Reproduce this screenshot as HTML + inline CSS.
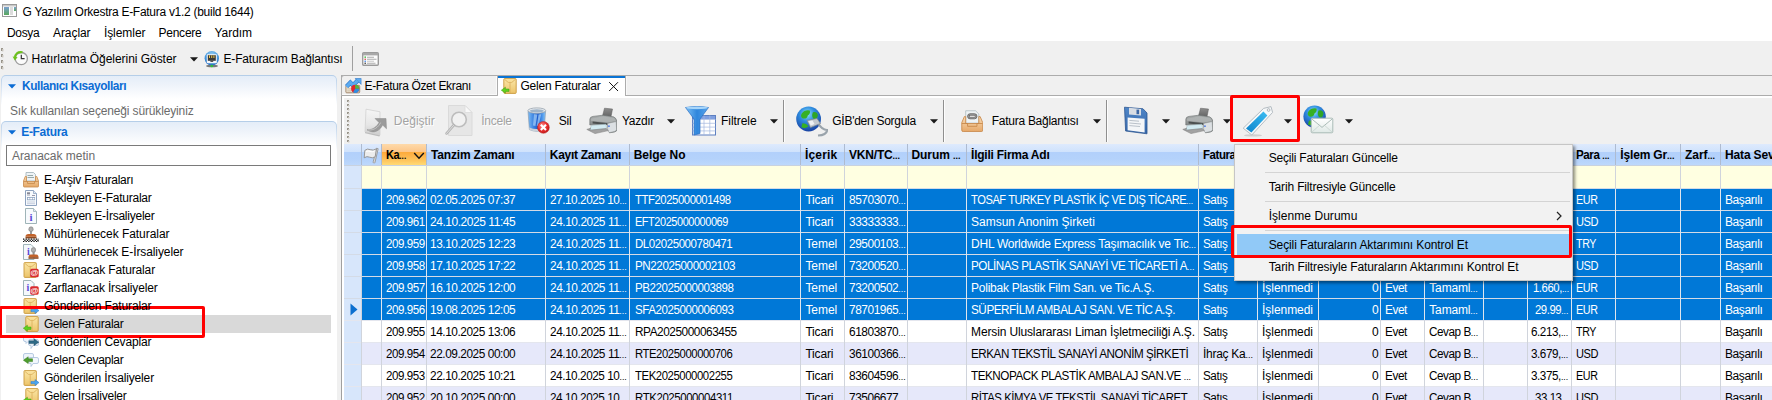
<!DOCTYPE html><html lang="tr"><head><meta charset="utf-8"><title>G Yazılım Orkestra E-Fatura</title><style>
html,body{margin:0;padding:0}
body{width:1772px;height:400px;overflow:hidden;background:#f0f0f0;position:relative;
font-family:"Liberation Sans",sans-serif;font-size:12px;color:#000}
div,span,svg{position:absolute}
.t{white-space:pre;line-height:16px;height:16px;font-size:12px;transform-origin:0 0}
.b{font-weight:bold}
i{font-style:normal;font-size:9px;letter-spacing:0}
.dis{color:#a3a3a3;text-shadow:1px 1px 0 #fff}
.r{background:#ff0000}
</style></head><body>
<div style="left:0px;top:0px;width:1772px;height:41px;background:#fff;"></div>
<svg style="left:2px;top:4px" width="15" height="13" viewBox="0 0 15 13"><defs><linearGradient id="g26" x1="0" y1="0" x2="0" y2="1"><stop offset="0" stop-color="#7a9fd0"/><stop offset="1" stop-color="#58a85c"/></linearGradient></defs><rect x="0.5" y="0.5" width="14" height="12" fill="#fff" stroke="#9a9a9a"/><rect x="1" y="1" width="13" height="1.5" fill="#c8c8c8"/><rect x="2" y="3" width="5" height="8" fill="url(#g26)"/><rect x="8" y="3" width="3" height="8" fill="#dcdcdc"/><rect x="12" y="3" width="2" height="4" fill="url(#g26)"/></svg>
<svg style="left:1px;top:48px" width="3" height="22" viewBox="0 0 3 22"><rect x="0" y="0" width="2" height="3" fill="#9a968c"/><rect x="1" y="1" width="1.4" height="2.4" fill="#c8c4bc"/><rect x="0" y="6" width="2" height="3" fill="#9a968c"/><rect x="1" y="7" width="1.4" height="2.4" fill="#c8c4bc"/><rect x="0" y="12" width="2" height="3" fill="#9a968c"/><rect x="1" y="13" width="1.4" height="2.4" fill="#c8c4bc"/><rect x="0" y="18" width="2" height="3" fill="#9a968c"/><rect x="1" y="19" width="1.4" height="2.4" fill="#c8c4bc"/></svg>
<svg style="left:12px;top:50px" width="17" height="17" viewBox="0 0 17 17"><circle cx="9.3" cy="8.6" r="6.1" fill="#fbfbfb" stroke="#9c9c9c" stroke-width="1.3"/><path d="M9.3 4.8V8.6H12.6" stroke="#333" stroke-width="1.2" fill="none"/><path d="M10.5 2.3C6 1.2 2.8 4 3 8" stroke="#6cc21c" stroke-width="2.2" fill="none"/><path d="M0.6 6.6L5.6 7.2L2.8 10.6Z" fill="#6cc21c"/></svg>
<svg style="left:190px;top:57px" width="8" height="5" viewBox="0 0 8 5"><path d="M0 0.3H8L4 4.6Z" fill="#1a1a1a"/></svg>
<svg style="left:204px;top:51px" width="16" height="17" viewBox="0 0 16 17"><defs><radialGradient id="g27" cx="0.5" cy="0.3" r="0.7"><stop offset="0" stop-color="#9fd4f5"/><stop offset="0.6" stop-color="#4a9be0"/><stop offset="1" stop-color="#2a6fc0"/></radialGradient></defs><ellipse cx="8" cy="15" rx="6" ry="1.3" fill="#444" opacity=".7"/><circle cx="7.8" cy="7.3" r="7.2" fill="url(#g27)"/><rect x="2.8" y="3.2" width="10" height="9" rx="0.8" fill="#f3f5fa"/><rect x="3.8" y="4.2" width="8" height="5.6" fill="#3a3a3a"/><rect x="5" y="4.4" width="1" height="2.6" fill="#e8c24a"/><rect x="7.2" y="4.4" width="1" height="2.6" fill="#e8c24a"/><rect x="9.4" y="4.4" width="1" height="2.6" fill="#e8c24a"/><rect x="6.4" y="9" width="2.8" height="2" fill="#555"/><circle cx="7.8" cy="15" r="1.3" fill="#2fc03a"/></svg>
<div style="left:352px;top:46px;width:1px;height:25px;background:#a0a0a0;"></div>
<svg style="left:362px;top:52px" width="17" height="14" viewBox="0 0 17 14"><rect x="0.7" y="0.7" width="15.6" height="12.6" rx="1" fill="#fcfcfc" stroke="#9b9b9b" stroke-width="1.4"/><rect x="1" y="1" width="15" height="2.4" fill="#a8a8a8"/><rect x="2.5" y="4.5" width="1.4" height="1.3" fill="#22b022"/><rect x="2.5" y="6.6" width="1.4" height="1.3" fill="#d04040"/><rect x="2.5" y="8.6" width="1.4" height="1.3" fill="#3a7fe8"/><rect x="2.5" y="10.6" width="1.4" height="1.3" fill="#333"/><rect x="5" y="4.8" width="7" height="0.8" fill="#999"/><rect x="5" y="6.8" width="9.5" height="0.8" fill="#999"/><rect x="5" y="8.8" width="7" height="0.8" fill="#bbb"/><rect x="5" y="10.8" width="8.5" height="0.8" fill="#999"/></svg>
<div style="left:1px;top:76px;width:336px;height:330px;background:#fff;border-radius:4px 4px 0 0"></div>
<div style="left:1px;top:75px;width:336px;height:30px;border-radius:5px 5px 0 0;background:linear-gradient(#b4cde8,#dfe9f5 55%,#fff)"></div>
<div style="left:2px;top:76px;width:334px;height:29px;border-radius:4px 4px 0 0;background:linear-gradient(#e4edf8 0,#eef3fa 9px,#fff 23px)"></div>
<div style="left:1px;top:121px;width:336px;height:30px;border-radius:5px 5px 0 0;background:linear-gradient(#b4cde8,#dfe9f5 55%,#fff)"></div>
<div style="left:2px;top:122px;width:334px;height:29px;border-radius:4px 4px 0 0;background:linear-gradient(#e4edf8 0,#eef3fa 9px,#fff 23px)"></div>
<svg style="left:8px;top:84px" width="8" height="5" viewBox="0 0 8 5"><path d="M0 0.3H8L4 4.6Z" fill="#0b6cd4"/></svg>
<svg style="left:8px;top:130px" width="8" height="5" viewBox="0 0 8 5"><path d="M0 0.3H8L4 4.6Z" fill="#0b6cd4"/></svg>
<div style="left:6px;top:145px;width:323px;height:19px;border:1px solid #7a7a7a;background:#fff"></div>
<div style="left:6px;top:315px;width:325px;height:18px;background:#d9d9d9;"></div>
<svg style="left:23px;top:172px" width="16" height="16" viewBox="0 0 16 16"><defs><linearGradient id="g28" x1="0" y1="0" x2="0" y2="1"><stop offset="0" stop-color="#f8d7ad"/><stop offset="1" stop-color="#e5a867"/></linearGradient></defs><path d="M3 0.5H10.5L12.5 2.5V9H3Z" fill="#eef3f6" stroke="#9fb0b8" stroke-width=".8"/><rect x="4.5" y="3" width="5.5" height="1" fill="#9aa"/><rect x="4.5" y="5" width="6.5" height="1" fill="#9aa"/><path d="M2.2 4.5L0.5 9V14.2Q0.5 15 1.3 15H14.7Q15.5 15 15.5 14.2V9L13.8 4.5H12.5V9.5H3.5V4.5Z" fill="url(#g28)" stroke="#c88a4c" stroke-width=".8"/><path d="M0.8 9.5H4.5V11.5H11.5V9.5H15.2" fill="none" stroke="#c88a4c" stroke-width=".8"/></svg>
<svg style="left:23px;top:190px" width="16" height="16" viewBox="0 0 16 16"><path d="M2.5 0.5H10.5L13.5 3.5V15.5H2.5Z" fill="#f7fafd" stroke="#8ea3c0"/><path d="M10.5 0.5V3.5H13.5" fill="#dfe8f2" stroke="#8ea3c0" stroke-width=".8"/><rect x="4" y="2.5" width="3" height="1.2" fill="#556"/><rect x="4" y="4.5" width="3" height="1" fill="#99a"/><rect x="9" y="5" width="3" height="1" fill="#99a"/><rect x="4" y="7" width="8" height="3.2" fill="#8ea3c0"/><rect x="4.8" y="7.8" width="1.8" height="1.6" fill="#fff"/><rect x="7.2" y="7.8" width="1.8" height="1.6" fill="#fff"/><rect x="9.6" y="7.8" width="1.8" height="1.6" fill="#fff"/><rect x="4" y="11.5" width="8" height="1" fill="#c5cede"/><rect x="4" y="13.2" width="8" height="1" fill="#c5cede"/></svg>
<svg style="left:23px;top:208px" width="16" height="16" viewBox="0 0 16 16"><path d="M2.5 0.5H10.5L13.5 3.5V15.5H2.5Z" fill="#f7fafd" stroke="#9fb4b8"/><path d="M10.5 0.5V3.5H13.5" fill="#dfe8f2" stroke="#9fb4b8" stroke-width=".8"/><text x="8" y="13" font-family="Liberation Serif,serif" font-weight="bold" font-size="11" fill="#5a49d8" text-anchor="middle">i</text></svg>
<svg style="left:23px;top:226px" width="16" height="16" viewBox="0 0 16 16"><ellipse cx="8" cy="3.2" rx="2.2" ry="2.4" fill="#b0b0b0" stroke="#7c7c7c" stroke-width=".6"/><rect x="7.1" y="5" width="1.8" height="3.6" fill="#8f8f8f"/><path d="M2.5 10.8Q2.5 8 5.5 8H10.5Q13.5 8 13.5 10.8Z" fill="#c2622a"/><rect x="2.5" y="10.8" width="11" height="1.6" fill="#8c4a22"/><path d="M0 13.1H16" stroke="#111" stroke-width="1.2" stroke-dasharray="1.3 1.3"/><path d="M0 14.3H16" stroke="#111" stroke-width="1.2" stroke-dasharray="1.3 1.3" stroke-dashoffset="1.3"/><path d="M0 15.5H16" stroke="#111" stroke-width="1" stroke-dasharray="1.3 1.3"/></svg>
<svg style="left:23px;top:244px" width="16" height="16" viewBox="0 0 16 16"><path d="M0.5 0.5H8L11 3.5V15.5H0.5Z" fill="#f4f8fb" stroke="#9fb4b8"/><text x="5.5" y="11" font-family="Liberation Serif,serif" font-weight="bold" font-size="10" fill="#5a49d8" text-anchor="middle">i</text><ellipse cx="10.5" cy="6" rx="2.2" ry="2.4" fill="#b0b0b0" stroke="#7c7c7c" stroke-width=".6"/><rect x="9.6" y="7.8" width="1.8" height="3.6" fill="#8f8f8f"/><path d="M5.5 13.2Q5.5 10.6 8 10.6H13Q15.5 10.6 15.5 13.2Z" fill="#c2622a"/><rect x="5.5" y="13.2" width="10" height="1.6" fill="#8c4a22"/></svg>
<svg style="left:23px;top:262px" width="16" height="16" viewBox="0 0 16 16"><defs><linearGradient id="g29" x1="0" y1="0" x2="0" y2="1"><stop offset="0" stop-color="#fbe7a8"/><stop offset="1" stop-color="#ecc46a"/></linearGradient></defs><rect x="1" y="0.6" width="12.4" height="14.8" rx="0.8" fill="url(#g29)" stroke="#c9983c" stroke-width=".9"/><path d="M1.4 1L5.4 4.4H9L13 1" fill="#f9e09a" stroke="#d6a852" stroke-width=".7"/><path d="M7.2 4.4V15" stroke="#d9ad5c" stroke-width=".8"/><rect x="7.2" y="6.8" width="8.5" height="8.5" rx="1.6" fill="#d92b30"/><text x="11.5" y="13.4" font-family="Liberation Sans,sans-serif" font-weight="bold" font-size="8" fill="#fff" text-anchor="middle">@</text></svg>
<svg style="left:23px;top:280px" width="16" height="16" viewBox="0 0 16 16"><path d="M0.5 0.5H8L11 3.5V15.5H0.5Z" fill="#f4f8fb" stroke="#9fb4b8"/><text x="5" y="11" font-family="Liberation Serif,serif" font-weight="bold" font-size="10" fill="#5a49d8" text-anchor="middle">i</text><rect x="7.2" y="6.2" width="8.5" height="8.5" rx="1.6" fill="#d92b30"/><text x="11.5" y="12.8" font-family="Liberation Sans,sans-serif" font-weight="bold" font-size="8" fill="#fff" text-anchor="middle">@</text></svg>
<svg style="left:23px;top:298px" width="16" height="16" viewBox="0 0 16 16"><defs><linearGradient id="g30" x1="0" y1="0" x2="0" y2="1"><stop offset="0" stop-color="#fbe7a8"/><stop offset="1" stop-color="#ecc46a"/></linearGradient></defs><rect x="1" y="0.6" width="12.4" height="14.8" rx="0.8" fill="url(#g30)" stroke="#c9983c" stroke-width=".9"/><path d="M1.4 1L5.4 4.4H9L13 1" fill="#f9e09a" stroke="#d6a852" stroke-width=".7"/><path d="M7.2 4.4V15" stroke="#d9ad5c" stroke-width=".8"/><path d="M8 11.4H12V9.6L16 12.6L12 15.6V13.8H8Z" fill="#4aa4f0" stroke="#2a78c8" stroke-width=".5"/></svg>
<svg style="left:23px;top:316px" width="16" height="16" viewBox="0 0 16 16"><g transform="translate(1.8 0)"><defs><linearGradient id="g31" x1="0" y1="0" x2="0" y2="1"><stop offset="0" stop-color="#fbe7a8"/><stop offset="1" stop-color="#ecc46a"/></linearGradient></defs><rect x="1" y="0.6" width="12.4" height="14.8" rx="0.8" fill="url(#g31)" stroke="#c9983c" stroke-width=".9"/><path d="M1.4 1L5.4 4.4H9L13 1" fill="#f9e09a" stroke="#d6a852" stroke-width=".7"/><path d="M7.2 4.4V15" stroke="#d9ad5c" stroke-width=".8"/></g><path d="M8 11H4.4V9.2L0.3 12.2L4.4 15.2V13.4H8Z" fill="#5fd21e" stroke="#3f9a10" stroke-width=".5"/></svg>
<svg style="left:23px;top:334px" width="16" height="16" viewBox="0 0 16 16"><path d="M2 1.5H9Q10.5 1.5 10.5 3V6Q10.5 7.5 9 7.5H5L3 9.5V7.5H2Q0.5 7.5 0.5 6V3Q0.5 1.5 2 1.5Z" fill="#eef4fb" stroke="#a9c0dc" stroke-width=".8"/><path d="M7 5.5H14Q15.5 5.5 15.5 7V10Q15.5 11.5 14 11.5H10L8 14.5V11.5H7Q5.5 11.5 5.5 10V7Q5.5 5.5 7 5.5Z" fill="#f2f7fc" stroke="#a9c0dc" stroke-width=".8"/><path d="M6 6.8H11V4.8L15.8 8.2L11 11.6V9.6H6Z" fill="#2d6a86" stroke="#1d4c66" stroke-width=".5"/></svg>
<svg style="left:23px;top:352px" width="16" height="16" viewBox="0 0 16 16"><path d="M2 1.5H9Q10.5 1.5 10.5 3V6Q10.5 7.5 9 7.5H5L3 9.5V7.5H2Q0.5 7.5 0.5 6V3Q0.5 1.5 2 1.5Z" fill="#eef4fb" stroke="#a9c0dc" stroke-width=".8"/><path d="M7 5.5H14Q15.5 5.5 15.5 7V10Q15.5 11.5 14 11.5H10L8 14.5V11.5H7Q5.5 11.5 5.5 10V7Q5.5 5.5 7 5.5Z" fill="#f2f7fc" stroke="#a9c0dc" stroke-width=".8"/><path d="M9.5 6.8H5.2V4.8L0.4 8.2L5.2 11.6V9.6H9.5Z" fill="#4e9e2e" stroke="#357a1a" stroke-width=".5"/></svg>
<svg style="left:23px;top:370px" width="16" height="16" viewBox="0 0 16 16"><defs><linearGradient id="g32" x1="0" y1="0" x2="0" y2="1"><stop offset="0" stop-color="#fbe7a8"/><stop offset="1" stop-color="#ecc46a"/></linearGradient></defs><rect x="1" y="0.6" width="12.4" height="14.8" rx="0.8" fill="url(#g32)" stroke="#c9983c" stroke-width=".9"/><path d="M1.4 1L5.4 4.4H9L13 1" fill="#f9e09a" stroke="#d6a852" stroke-width=".7"/><path d="M7.2 4.4V15" stroke="#d9ad5c" stroke-width=".8"/><path d="M8 11.4H12V9.6L16 12.6L12 15.6V13.8H8Z" fill="#4aa4f0" stroke="#2a78c8" stroke-width=".5"/></svg>
<svg style="left:23px;top:388px" width="16" height="16" viewBox="0 0 16 16"><g transform="translate(1.8 0)"><defs><linearGradient id="g33" x1="0" y1="0" x2="0" y2="1"><stop offset="0" stop-color="#fbe7a8"/><stop offset="1" stop-color="#ecc46a"/></linearGradient></defs><rect x="1" y="0.6" width="12.4" height="14.8" rx="0.8" fill="url(#g33)" stroke="#c9983c" stroke-width=".9"/><path d="M1.4 1L5.4 4.4H9L13 1" fill="#f9e09a" stroke="#d6a852" stroke-width=".7"/><path d="M7.2 4.4V15" stroke="#d9ad5c" stroke-width=".8"/></g><path d="M8 11H4.4V9.2L0.3 12.2L4.4 15.2V13.4H8Z" fill="#5fd21e" stroke="#3f9a10" stroke-width=".5"/></svg>
<div style="left:341px;top:75px;width:1431px;height:1px;background:#acacac;"></div>
<div style="left:341px;top:76px;width:1431px;height:19px;background:#f0f0f0;"></div>
<div style="left:341px;top:95px;width:1431px;height:1px;background:#acacac;"></div>
<div style="left:341px;top:96px;width:1431px;height:2px;background:#fff;"></div>
<div style="left:341px;top:76px;width:1px;height:330px;background:#a0a0a0;"></div>
<div style="left:342px;top:96px;width:2px;height:310px;background:#fff;"></div>
<div style="left:341px;top:75px;width:155px;height:19px;border:1px solid #acacac;border-radius:3px 0 0 0;background:#f0f0f0;box-shadow:inset -1px -1px 0 #fafafa"></div>
<svg style="left:345px;top:78px" width="17" height="16" viewBox="0 0 17 16"><rect x="0.9" y="7.4" width="13.8" height="7.4" rx="0.8" fill="#efe6d6" stroke="#9b7d60" stroke-width=".9"/><rect x="2.2" y="10.4" width="4" height="1" fill="#c9baa4"/><rect x="2.2" y="12.4" width="4" height="1" fill="#c9baa4"/><path d="M1.6 8.6L5.4 4.6L8 7.2L12.6 2.6" stroke="#2b74c6" stroke-width="4.4" fill="none" stroke-linejoin="miter"/><path d="M9.6 0.3H16.4V7.1Z" fill="#2b74c6"/><path d="M1.6 8.6L5.4 4.6L8 7.2L12.6 2.6" stroke="#5aaaf0" stroke-width="3.2" fill="none" stroke-linejoin="miter"/><path d="M10.8 0.8H15.9V5.9Z" fill="#5aaaf0"/><circle cx="10.2" cy="10.8" r="4.1" fill="#e2262c"/><path d="M10.2 10.8V6.7A4.1 4.1 0 0 1 14.3 10.8Z" fill="#52ba3c"/><path d="M10.2 10.8H14.3A4.1 4.1 0 0 1 8 14.3Z" fill="#2f8fe0"/></svg>
<div style="left:498px;top:76px;width:127px;height:22px;background:#fff;"></div>
<div style="left:497px;top:76px;width:1px;height:19px;background:#acacac;"></div>
<div style="left:625px;top:76px;width:1px;height:19px;background:#acacac;"></div>
<div style="left:498px;top:76px;width:127px;height:2px;background:#0a74d4;"></div>
<div style="left:626px;top:76px;width:1px;height:19px;background:#f8f8f8;"></div>
<svg style="left:501px;top:78px" width="16" height="16" viewBox="0 0 16 16"><g transform="translate(1.8 0)"><defs><linearGradient id="g34" x1="0" y1="0" x2="0" y2="1"><stop offset="0" stop-color="#fbe7a8"/><stop offset="1" stop-color="#ecc46a"/></linearGradient></defs><rect x="1" y="0.6" width="12.4" height="14.8" rx="0.8" fill="url(#g34)" stroke="#c9983c" stroke-width=".9"/><path d="M1.4 1L5.4 4.4H9L13 1" fill="#f9e09a" stroke="#d6a852" stroke-width=".7"/><path d="M7.2 4.4V15" stroke="#d9ad5c" stroke-width=".8"/></g><path d="M8 11H4.4V9.2L0.3 12.2L4.4 15.2V13.4H8Z" fill="#5fd21e" stroke="#3f9a10" stroke-width=".5"/></svg>
<svg style="left:608px;top:81px" width="11" height="11" viewBox="0 0 11 11"><path d="M1.2 1.2L10 10M10 1.2L1.2 10" stroke="#111" stroke-width="1" fill="none"/></svg>
<svg style="left:347px;top:100px" width="3" height="43" viewBox="0 0 3 43"><rect x="0" y="0" width="2" height="2" fill="#9a968c"/><rect x="1" y="1" width="1.4" height="1.4" fill="#c8c4bc"/><rect x="0" y="4" width="2" height="2" fill="#9a968c"/><rect x="1" y="5" width="1.4" height="1.4" fill="#c8c4bc"/><rect x="0" y="8" width="2" height="2" fill="#9a968c"/><rect x="1" y="9" width="1.4" height="1.4" fill="#c8c4bc"/><rect x="0" y="12" width="2" height="2" fill="#9a968c"/><rect x="1" y="13" width="1.4" height="1.4" fill="#c8c4bc"/><rect x="0" y="16" width="2" height="2" fill="#9a968c"/><rect x="1" y="17" width="1.4" height="1.4" fill="#c8c4bc"/><rect x="0" y="20" width="2" height="2" fill="#9a968c"/><rect x="1" y="21" width="1.4" height="1.4" fill="#c8c4bc"/><rect x="0" y="24" width="2" height="2" fill="#9a968c"/><rect x="1" y="25" width="1.4" height="1.4" fill="#c8c4bc"/><rect x="0" y="28" width="2" height="2" fill="#9a968c"/><rect x="1" y="29" width="1.4" height="1.4" fill="#c8c4bc"/><rect x="0" y="32" width="2" height="2" fill="#9a968c"/><rect x="1" y="33" width="1.4" height="1.4" fill="#c8c4bc"/><rect x="0" y="36" width="2" height="2" fill="#9a968c"/><rect x="1" y="37" width="1.4" height="1.4" fill="#c8c4bc"/><rect x="0" y="40" width="2" height="2" fill="#9a968c"/><rect x="1" y="41" width="1.4" height="1.4" fill="#c8c4bc"/></svg>
<svg style="left:364px;top:108px" width="24" height="29" viewBox="0 0 24 29"><defs><linearGradient id="g35" x1="0" y1="0" x2="0" y2="1"><stop offset="0" stop-color="#f6f6f6"/><stop offset="0.6" stop-color="#e6e6e6"/><stop offset="1" stop-color="#cdcdcd"/></linearGradient></defs><path d="M2 1.2L16 3.8V27.2L1 24Z" fill="url(#g35)" stroke="#d2d2d2" stroke-width=".8"/><path d="M1 24L16 27.2L15.4 28.4L1.2 25.2Z" fill="#bdbdbd"/><path d="M3 21.8C9 22 13 18.5 15 14.5L11 10.5H22L22.5 20.8L18.6 17C16 22.5 10 26.5 3 21.8Z" fill="#9b9b9b" stroke="#8a8a8a" stroke-width=".5"/><path d="M4 22C10 22.6 14.6 19 16.6 14.6" stroke="#c4c4c4" stroke-width="1" fill="none"/></svg>
<svg style="left:445px;top:105px" width="28" height="32" viewBox="0 0 28 32"><path d="M3.5 0.5H20L27 7.5V30.5H3.5Z" fill="#e6e6e6" stroke="#dadada"/><path d="M20 0.5V7.5H27Z" fill="#f8f8f8" stroke="#dadada" stroke-width=".8"/><circle cx="14" cy="14.5" r="7.3" fill="#f1f1f1" stroke="#bdbdbd" stroke-width="1.6"/><path d="M8.6 20.4L1.6 28.4" stroke="#b4b4b4" stroke-width="2.6" stroke-linecap="round"/><path d="M8.6 20.4L1.6 28.4" stroke="#dedede" stroke-width="1" stroke-linecap="round"/></svg>
<svg style="left:527px;top:107px" width="23" height="27" viewBox="0 0 23 27"><defs><linearGradient id="g36" x1="0" y1="0" x2="1" y2="0"><stop offset="0" stop-color="#7dbcf4"/><stop offset="0.3" stop-color="#3f86e2"/><stop offset="0.55" stop-color="#1c5ccc"/><stop offset="0.8" stop-color="#4a94ea"/><stop offset="1" stop-color="#8cc8f8"/></linearGradient><radialGradient id="g37" cx="0.4" cy="0.35" r="0.7"><stop offset="0" stop-color="#ff8a8a"/><stop offset="0.6" stop-color="#e52d2d"/><stop offset="1" stop-color="#c01818"/></radialGradient></defs><path d="M1 4.2L2.4 22.6Q9.8 26 17.2 22.6L18.6 4.2Q9.8 7.4 1 4.2Z" fill="url(#g36)" stroke="#8a97a6" stroke-width=".6"/><path d="M2.2 20.4Q9.8 23.4 17.4 20.4L17.2 22.8Q9.8 26 2.4 22.8Z" fill="#c9d1d9"/><path d="M7 7.2L6 18.6L8.4 19L10.4 7.6ZM11.6 7.6L9.8 19L11.4 19L14.2 7.2Z" fill="#a8d2f8" opacity=".7"/><ellipse cx="9.8" cy="3.6" rx="8.9" ry="2.7" fill="#e6eaee" stroke="#98a3ae" stroke-width=".8"/><ellipse cx="9.8" cy="3.9" rx="7" ry="1.6" fill="#9fb4c8"/><circle cx="16.4" cy="20.4" r="5.9" fill="url(#g37)" stroke="#b82020" stroke-width=".5"/><path d="M13.8 17.8L19 23M19 17.8L13.8 23" stroke="#fff" stroke-width="2.1"/></svg>
<svg style="left:586px;top:107px" width="31" height="28" viewBox="0 0 31 28"><defs><linearGradient id="g38" x1="0" y1="0" x2="0" y2="1"><stop offset="0" stop-color="#8c8c8c"/><stop offset="1" stop-color="#646464"/></linearGradient><linearGradient id="g39" x1="0" y1="0" x2="0" y2="1"><stop offset="0" stop-color="#a9adad"/><stop offset="0.5" stop-color="#8a8e8e"/><stop offset="1" stop-color="#6e7272"/></linearGradient></defs><path d="M18.5 1.2L26.5 2L25 9.8L16.5 9Z" fill="url(#g38)" stroke="#5a5a5a" stroke-width=".5"/><path d="M3.8 12.4Q3.8 9.8 7 9.4L17 8.2L27.5 9.8Q30.6 11 31 15V22Q31 24.6 28.5 25L23.5 25.8L21 17L3.8 18Z" fill="url(#g39)" stroke="#6a6e6e" stroke-width=".6"/><path d="M5.2 11.4L17 9.4L28 11Q29.6 12 30 14L22 15.6L5 13.8Z" fill="#b4b8b8" opacity=".75"/><path d="M6.6 14.4L22.6 16.2V18.2L6.6 16.4Z" fill="#4c5050"/><path d="M21.4 16.4L30.2 14.6L30.6 22.6Q30.4 24 28.6 24.4L23.6 25.6L21.8 24Z" fill="#dce0e3" stroke="#8b8f8f" stroke-width=".5"/><rect x="22.3" y="18.4" width="1.3" height="1.6" fill="#2f62e0"/><path d="M5.4 18.4L20 17.2L20.6 21.4L3.6 23.2Z" fill="#d3ebf2" stroke="#9fb4ba" stroke-width=".5"/><path d="M0.8 22.4L4.6 21.2L3.8 23.2L20.4 21.6L22.4 23.6L9 26.6Z" fill="#a2a2a2" stroke="#7c7c7c" stroke-width=".5"/></svg>
<svg style="left:666.5px;top:119px" width="8" height="5" viewBox="0 0 8 5"><path d="M0 0.3H8L4 4.6Z" fill="#1a1a1a"/></svg>
<svg style="left:685px;top:106px" width="31" height="30" viewBox="0 0 31 30"><defs><linearGradient id="g40" x1="0" y1="0" x2="1" y2="0"><stop offset="0" stop-color="#7cc0f6"/><stop offset="0.5" stop-color="#2f86dc"/><stop offset="1" stop-color="#5aa6ec"/></linearGradient></defs><rect x="7.5" y="9.5" width="23" height="19.5" fill="#fff" stroke="#5d7fc0"/><rect x="8" y="10" width="22" height="3.2" fill="#7f9fe0"/><path d="M7.5 13.5H30.5" stroke="#a3b8e0" stroke-width=".7"/><path d="M7.5 17.3H30.5" stroke="#a3b8e0" stroke-width=".7"/><path d="M7.5 21.1H30.5" stroke="#a3b8e0" stroke-width=".7"/><path d="M7.5 24.9H30.5" stroke="#a3b8e0" stroke-width=".7"/><path d="M13.2 9.5V29" stroke="#a3b8e0" stroke-width=".7"/><path d="M19 9.5V29" stroke="#a3b8e0" stroke-width=".7"/><path d="M24.8 9.5V29" stroke="#a3b8e0" stroke-width=".7"/><path d="M0.5 1.5Q12 -1 23.5 1.5L15 13V27.5L9 29V13Z" fill="url(#g40)" stroke="#2a6fc4" stroke-width=".7"/><ellipse cx="12" cy="1.8" rx="11" ry="1.4" fill="#a8d6fa"/></svg>
<svg style="left:769.5px;top:119px" width="8" height="5" viewBox="0 0 8 5"><path d="M0 0.3H8L4 4.6Z" fill="#1a1a1a"/></svg>
<div style="left:783px;top:100px;width:1px;height:42px;background:#8f8f8f"></div><div style="left:784px;top:100px;width:1px;height:42px;background:#fdfdfd"></div>
<svg style="left:796px;top:106px" width="32" height="31" viewBox="0 0 32 31"><defs><radialGradient id="g41" cx="0.45" cy="0.3" r="0.75"><stop offset="0" stop-color="#8fe4fb"/><stop offset="0.4" stop-color="#2f8de0"/><stop offset="1" stop-color="#163a9c"/></radialGradient><clipPath id="g42"><circle cx="12.6" cy="13" r="12.4"/></clipPath></defs><circle cx="12.6" cy="13" r="12.4" fill="url(#g41)"/><g clip-path="url(#g42)"><path d="M5.7799999999999985 7.42q3-4 8-3q1 3-2 5q-1 4-5 3q-3-2-1-5z" fill="#36b024"/><path d="M16.939999999999998 6.179999999999999q4-1 5 3q-1 5-4 4q-3-3-1-7z" fill="#2fa626"/><path d="M6.3999999999999995 17.34q4 0 6 3q-3 3-7 1z" fill="#36b024"/></g><path d="M22 17Q26 24 31 24Q31 29 22 29.5" stroke="#9aa4ac" stroke-width="2.2" fill="none"/><path d="M11 14.5L21 12.5L24.5 17.5L14.5 21.5Z" fill="#c3c9cf" stroke="#7e868e" stroke-width=".7"/><path d="M12.5 15.3L16.5 14.5L18.5 18L14.8 19.6Z" fill="#eef1f4"/></svg>
<svg style="left:930px;top:119px" width="8" height="5" viewBox="0 0 8 5"><path d="M0 0.3H8L4 4.6Z" fill="#1a1a1a"/></svg>
<div style="left:943px;top:100px;width:1px;height:42px;background:#8f8f8f"></div><div style="left:944px;top:100px;width:1px;height:42px;background:#fdfdfd"></div>
<svg style="left:960.5px;top:109.5px" width="22.5" height="22.5" viewBox="0 0 24 24"><defs><linearGradient id="g43" x1="0" y1="0" x2="0" y2="1"><stop offset="0" stop-color="#f9dcb6"/><stop offset="1" stop-color="#e6a868"/></linearGradient></defs><path d="M5 0.8H15.5L19 4.2V14H5Z" fill="#eef3f5" stroke="#a9b8bd" stroke-width=".8"/><rect x="7" y="4" width="10" height="5.4" rx="2.6" fill="#9b9b9b" stroke="#555" stroke-width=".8"/><rect x="9" y="5.8" width="6" height="1.8" fill="#eee" stroke="#555" stroke-width=".5"/><path d="M3.6 7L0.8 13.5V21.5Q0.8 23 2.3 23H21.7Q23.2 23 23.2 21.5V13.5L20.4 7H19V14.4H5V7Z" fill="url(#g43)" stroke="#c78748" stroke-width=".9"/><path d="M1 14.4H7V17.4H17V14.4H23" fill="none" stroke="#c78748" stroke-width=".9"/></svg>
<svg style="left:1092.5px;top:119px" width="8" height="5" viewBox="0 0 8 5"><path d="M0 0.3H8L4 4.6Z" fill="#1a1a1a"/></svg>
<div style="left:1106px;top:100px;width:1px;height:42px;background:#8f8f8f"></div><div style="left:1107px;top:100px;width:1px;height:42px;background:#fdfdfd"></div>
<svg style="left:1123px;top:106px" width="25" height="30" viewBox="0 0 25 30"><defs><linearGradient id="g44" x1="0" y1="0" x2="0" y2="1"><stop offset="0" stop-color="#4f86c8"/><stop offset="1" stop-color="#3566a8"/></linearGradient></defs><path d="M1.5 1.2L20 2.8L24 7V27.8L2.6 25Z" fill="url(#g44)" stroke="#2c5590" stroke-width=".8"/><path d="M6 1.8L18 2.9V9.4L6 8.6Z" fill="#d8dde4"/><rect x="13.5" y="3.6" width="2.6" height="4.6" fill="#3c68a6"/><path d="M4.6 11.5L21.6 12.8V26.4L4.6 24.2Z" fill="#f4f6f8"/><path d="M6.4 14.4L16 15.2M6.4 17L18 18M6.4 19.6L17 20.5" stroke="#aab3bd" stroke-width=".8"/></svg>
<svg style="left:1161.5px;top:119px" width="8" height="5" viewBox="0 0 8 5"><path d="M0 0.3H8L4 4.6Z" fill="#1a1a1a"/></svg>
<svg style="left:1182px;top:107px" width="31" height="28" viewBox="0 0 31 28"><defs><linearGradient id="g45" x1="0" y1="0" x2="0" y2="1"><stop offset="0" stop-color="#8c8c8c"/><stop offset="1" stop-color="#646464"/></linearGradient><linearGradient id="g46" x1="0" y1="0" x2="0" y2="1"><stop offset="0" stop-color="#a9adad"/><stop offset="0.5" stop-color="#8a8e8e"/><stop offset="1" stop-color="#6e7272"/></linearGradient></defs><path d="M18.5 1.2L26.5 2L25 9.8L16.5 9Z" fill="url(#g45)" stroke="#5a5a5a" stroke-width=".5"/><path d="M3.8 12.4Q3.8 9.8 7 9.4L17 8.2L27.5 9.8Q30.6 11 31 15V22Q31 24.6 28.5 25L23.5 25.8L21 17L3.8 18Z" fill="url(#g46)" stroke="#6a6e6e" stroke-width=".6"/><path d="M5.2 11.4L17 9.4L28 11Q29.6 12 30 14L22 15.6L5 13.8Z" fill="#b4b8b8" opacity=".75"/><path d="M6.6 14.4L22.6 16.2V18.2L6.6 16.4Z" fill="#4c5050"/><path d="M21.4 16.4L30.2 14.6L30.6 22.6Q30.4 24 28.6 24.4L23.6 25.6L21.8 24Z" fill="#dce0e3" stroke="#8b8f8f" stroke-width=".5"/><rect x="22.3" y="18.4" width="1.3" height="1.6" fill="#2f62e0"/><path d="M5.4 18.4L20 17.2L20.6 21.4L3.6 23.2Z" fill="#d3ebf2" stroke="#9fb4ba" stroke-width=".5"/><path d="M0.8 22.4L4.6 21.2L3.8 23.2L20.4 21.6L22.4 23.6L9 26.6Z" fill="#a2a2a2" stroke="#7c7c7c" stroke-width=".5"/></svg>
<svg style="left:1222.5px;top:119px" width="8" height="5" viewBox="0 0 8 5"><path d="M0 0.3H8L4 4.6Z" fill="#1a1a1a"/></svg>
<svg style="left:1242px;top:105px" width="32" height="32" viewBox="0 0 32 32"><defs><linearGradient id="g47" x1="0" y1="1" x2="1" y2="0"><stop offset="0" stop-color="#0d84cc"/><stop offset="1" stop-color="#3cbcf2"/></linearGradient></defs><ellipse cx="11" cy="30.4" rx="9" ry="1.2" fill="#c8c8c8" opacity=".8"/><path d="M1.2 23.2L21.6 3.4L29 1.6L30.6 7.4L9.8 30Z" fill="#f6f8f9" stroke="#b4bcc2" stroke-width="1"/><path d="M4 23.4L21.4 6.6L25.4 10.6L9.4 27.4Z" fill="url(#g47)"/><circle cx="26.6" cy="5" r="1.4" fill="#f0f0f0" stroke="#9aa4ac" stroke-width=".7"/></svg>
<svg style="left:1283.5px;top:119px" width="8" height="5" viewBox="0 0 8 5"><path d="M0 0.3H8L4 4.6Z" fill="#1a1a1a"/></svg>
<svg style="left:1303px;top:105px" width="31" height="29" viewBox="0 0 31 29"><defs><radialGradient id="g49" cx="0.45" cy="0.3" r="0.75"><stop offset="0" stop-color="#8fe4fb"/><stop offset="0.4" stop-color="#2f8de0"/><stop offset="1" stop-color="#163a9c"/></radialGradient><clipPath id="g50"><circle cx="11.6" cy="11.6" r="11.2"/></clipPath></defs><circle cx="11.6" cy="11.6" r="11.2" fill="url(#g49)"/><g clip-path="url(#g50)"><path d="M5.4399999999999995 6.56q3-4 8-3q1 3-2 5q-1 4-5 3q-3-2-1-5z" fill="#36b024"/><path d="M15.52 5.4399999999999995q4-1 5 3q-1 5-4 4q-3-3-1-7z" fill="#2fa626"/><path d="M6.0 15.52q4 0 6 3q-3 3-7 1z" fill="#36b024"/></g><defs><linearGradient id="g48" x1="0" y1="0" x2="0" y2="1"><stop offset="0" stop-color="#ffffff"/><stop offset="1" stop-color="#dfe9e6"/></linearGradient></defs><rect x="8.2" y="13.2" width="21.6" height="14.6" rx="1" fill="url(#g48)" stroke="#a3b5b0" stroke-width=".9"/><path d="M8.6 13.8L19 22.4L29.4 13.8" fill="none" stroke="#a3b5b0" stroke-width=".9"/><path d="M8.6 27.4L16.4 20.4M29.4 27.4L21.6 20.4" stroke="#c3d0cc" stroke-width=".7"/></svg>
<svg style="left:1345px;top:119px" width="8" height="5" viewBox="0 0 8 5"><path d="M0 0.3H8L4 4.6Z" fill="#1a1a1a"/></svg>
<div style="left:344px;top:144px;width:1428px;height:21px;background:linear-gradient(#deeafd 0,#cfe2fc 8px,#b2d0fb 8.5px,#b4d2fb 15px,#bdd8fc 21px)"></div>
<div style="left:382px;top:144px;width:44px;height:21px;background:linear-gradient(#fedaaa 0,#fdc688 8px,#fdab3c 8.5px,#fdb850 13px,#fec860 17px,#ffdb76 21px)"></div>
<div style="left:344px;top:166px;width:1428px;height:22px;background:#ffffe1;"></div>
<div style="left:344px;top:188px;width:1428px;height:22px;background:#0078d7;"></div>
<div style="left:344px;top:210px;width:1428px;height:22px;background:#0078d7;"></div>
<div style="left:344px;top:232px;width:1428px;height:22px;background:#0078d7;"></div>
<div style="left:344px;top:254px;width:1428px;height:22px;background:#0078d7;"></div>
<div style="left:344px;top:276px;width:1428px;height:22px;background:#0078d7;"></div>
<div style="left:344px;top:298px;width:1428px;height:22px;background:#0078d7;"></div>
<div style="left:344px;top:320px;width:1428px;height:22px;background:#fff;"></div>
<div style="left:344px;top:342px;width:1428px;height:22px;background:#e6e8fa;"></div>
<div style="left:344px;top:364px;width:1428px;height:22px;background:#fff;"></div>
<div style="left:344px;top:386px;width:1428px;height:22px;background:#e6e8fa;"></div>
<div style="left:344px;top:165px;width:17px;height:241px;background:#d7e6fb;"></div>
<div style="left:344px;top:188px;width:1428px;height:1px;background:#d4dbe6;"></div>
<div style="left:344px;top:210px;width:1428px;height:1px;background:#d4dbe6;"></div>
<div style="left:344px;top:232px;width:1428px;height:1px;background:#d4dbe6;"></div>
<div style="left:344px;top:254px;width:1428px;height:1px;background:#d4dbe6;"></div>
<div style="left:344px;top:276px;width:1428px;height:1px;background:#d4dbe6;"></div>
<div style="left:344px;top:298px;width:1428px;height:1px;background:#d4dbe6;"></div>
<div style="left:344px;top:320px;width:1428px;height:1px;background:#e4e6ee;"></div>
<div style="left:344px;top:342px;width:1428px;height:1px;background:#e4e6ee;"></div>
<div style="left:344px;top:364px;width:1428px;height:1px;background:#e4e6ee;"></div>
<div style="left:344px;top:386px;width:1428px;height:1px;background:#e4e6ee;"></div>
<div style="left:344px;top:165px;width:1428px;height:1px;background:#c9d2df;"></div>
<div style="left:361px;top:144px;width:1px;height:21px;background:#aebbd0;"></div>
<div style="left:361px;top:165px;width:1px;height:241px;background:#d0d4dc;"></div>
<div style="left:381px;top:144px;width:1px;height:21px;background:#aebbd0;"></div>
<div style="left:381px;top:165px;width:1px;height:241px;background:#d0d4dc;"></div>
<div style="left:426px;top:144px;width:1px;height:21px;background:#aebbd0;"></div>
<div style="left:426px;top:165px;width:1px;height:241px;background:#d0d4dc;"></div>
<div style="left:545px;top:144px;width:1px;height:21px;background:#aebbd0;"></div>
<div style="left:545px;top:165px;width:1px;height:241px;background:#d0d4dc;"></div>
<div style="left:629px;top:144px;width:1px;height:21px;background:#aebbd0;"></div>
<div style="left:629px;top:165px;width:1px;height:241px;background:#d0d4dc;"></div>
<div style="left:800px;top:144px;width:1px;height:21px;background:#aebbd0;"></div>
<div style="left:800px;top:165px;width:1px;height:241px;background:#d0d4dc;"></div>
<div style="left:844px;top:144px;width:1px;height:21px;background:#aebbd0;"></div>
<div style="left:844px;top:165px;width:1px;height:241px;background:#d0d4dc;"></div>
<div style="left:907px;top:144px;width:1px;height:21px;background:#aebbd0;"></div>
<div style="left:907px;top:165px;width:1px;height:241px;background:#d0d4dc;"></div>
<div style="left:966px;top:144px;width:1px;height:21px;background:#aebbd0;"></div>
<div style="left:966px;top:165px;width:1px;height:241px;background:#d0d4dc;"></div>
<div style="left:1198px;top:144px;width:1px;height:21px;background:#aebbd0;"></div>
<div style="left:1198px;top:165px;width:1px;height:241px;background:#d0d4dc;"></div>
<div style="left:1257px;top:144px;width:1px;height:21px;background:#aebbd0;"></div>
<div style="left:1257px;top:165px;width:1px;height:241px;background:#d0d4dc;"></div>
<div style="left:1318px;top:144px;width:1px;height:21px;background:#aebbd0;"></div>
<div style="left:1318px;top:165px;width:1px;height:241px;background:#d0d4dc;"></div>
<div style="left:1380px;top:144px;width:1px;height:21px;background:#aebbd0;"></div>
<div style="left:1380px;top:165px;width:1px;height:241px;background:#d0d4dc;"></div>
<div style="left:1424px;top:144px;width:1px;height:21px;background:#aebbd0;"></div>
<div style="left:1424px;top:165px;width:1px;height:241px;background:#d0d4dc;"></div>
<div style="left:1483px;top:144px;width:1px;height:21px;background:#aebbd0;"></div>
<div style="left:1483px;top:165px;width:1px;height:241px;background:#d0d4dc;"></div>
<div style="left:1527px;top:144px;width:1px;height:21px;background:#aebbd0;"></div>
<div style="left:1527px;top:165px;width:1px;height:241px;background:#d0d4dc;"></div>
<div style="left:1571px;top:144px;width:1px;height:21px;background:#aebbd0;"></div>
<div style="left:1571px;top:165px;width:1px;height:241px;background:#d0d4dc;"></div>
<div style="left:1615px;top:144px;width:1px;height:21px;background:#aebbd0;"></div>
<div style="left:1615px;top:165px;width:1px;height:241px;background:#d0d4dc;"></div>
<div style="left:1680px;top:144px;width:1px;height:21px;background:#aebbd0;"></div>
<div style="left:1680px;top:165px;width:1px;height:241px;background:#d0d4dc;"></div>
<div style="left:1720px;top:144px;width:1px;height:21px;background:#aebbd0;"></div>
<div style="left:1720px;top:165px;width:1px;height:241px;background:#d0d4dc;"></div>
<div style="left:381px;top:189px;width:1px;height:131px;background:#dfe6ee;"></div>
<div style="left:426px;top:189px;width:1px;height:131px;background:#dfe6ee;"></div>
<div style="left:545px;top:189px;width:1px;height:131px;background:#dfe6ee;"></div>
<div style="left:629px;top:189px;width:1px;height:131px;background:#dfe6ee;"></div>
<div style="left:800px;top:189px;width:1px;height:131px;background:#dfe6ee;"></div>
<div style="left:844px;top:189px;width:1px;height:131px;background:#dfe6ee;"></div>
<div style="left:907px;top:189px;width:1px;height:131px;background:#dfe6ee;"></div>
<div style="left:966px;top:189px;width:1px;height:131px;background:#dfe6ee;"></div>
<div style="left:1198px;top:189px;width:1px;height:131px;background:#dfe6ee;"></div>
<div style="left:1257px;top:189px;width:1px;height:131px;background:#dfe6ee;"></div>
<div style="left:1318px;top:189px;width:1px;height:131px;background:#dfe6ee;"></div>
<div style="left:1380px;top:189px;width:1px;height:131px;background:#dfe6ee;"></div>
<div style="left:1424px;top:189px;width:1px;height:131px;background:#dfe6ee;"></div>
<div style="left:1483px;top:189px;width:1px;height:131px;background:#dfe6ee;"></div>
<div style="left:1527px;top:189px;width:1px;height:131px;background:#dfe6ee;"></div>
<div style="left:1571px;top:189px;width:1px;height:131px;background:#dfe6ee;"></div>
<div style="left:1615px;top:189px;width:1px;height:131px;background:#dfe6ee;"></div>
<div style="left:1680px;top:189px;width:1px;height:131px;background:#dfe6ee;"></div>
<div style="left:1720px;top:189px;width:1px;height:131px;background:#dfe6ee;"></div>
<svg style="left:363px;top:147px" width="17" height="17" viewBox="0 0 17 17"><path d="M13.6 1.2L15.2 1.7L12 15.4Q11.6 16.4 10.7 16Q10 15.6 10.2 14.8Z" fill="#dcdcdc" stroke="#8f8f8f" stroke-width=".8"/><path d="M1.8 3.4Q4.4 1.2 7.2 2.6T13.4 1.8L12.2 9.8Q9.2 11.6 6.6 10.2T1.2 10.8Z" fill="#ececec" stroke="#8f8f8f" stroke-width=".9"/><path d="M3 4.6Q5 3.4 7 4.4T11.6 4" stroke="#fff" stroke-width="1" fill="none"/></svg>
<svg style="left:413px;top:152px" width="12" height="8" viewBox="0 0 12 8"><path d="M1.2 1L6 6.2L10.8 1" stroke="#111" stroke-width="1.4" fill="none"/></svg>
<svg style="left:349.5px;top:303px" width="8" height="13" viewBox="0 0 8 13"><path d="M0.5 0.5L7.5 6.5L0.5 12.5Z" fill="#0b6fd0"/></svg>
<div style="left:-1px;top:306px;width:200px;height:25.5px;border:3px solid #f00;border-radius:2px"></div>
<span id="t0" class="t" style="left:22.5px;top:3.6px;letter-spacing:-0.281px;">G Yazılım Orkestra E-Fatura v1.2 (build 1644)</span>
<span id="t1" class="t" style="left:7px;top:24.6px;letter-spacing:-0.343px;">Dosya</span>
<span id="t2" class="t" style="left:53px;top:24.6px;letter-spacing:-0.074px;">Araçlar</span>
<span id="t3" class="t" style="left:103.9px;top:24.6px;letter-spacing:-0.052px;">İşlemler</span>
<span id="t4" class="t" style="left:158.5px;top:24.6px;letter-spacing:-0.243px;">Pencere</span>
<span id="t5" class="t" style="left:214.5px;top:24.6px;letter-spacing:-0.049px;">Yardım</span>
<span id="t6" class="t" style="left:31.5px;top:50.6px;letter-spacing:-0.039px;">Hatırlatma Öğelerini Göster</span>
<span id="t7" class="t" style="left:223.5px;top:50.6px;letter-spacing:-0.169px;">E-Faturacım Bağlantısı</span>
<span id="t8" class="t b" style="left:21.5px;top:77.6px;color:#0b6cd4;letter-spacing:-0.45px;transform:scaleX(0.9943);">Kullanıcı Kısayolları</span>
<span id="t9" class="t" style="left:10px;top:102.6px;color:#6b6b6b;letter-spacing:-0.146px;">Sık kullanılan seçeneği sürükleyiniz</span>
<span id="t10" class="t b" style="left:21.2px;top:123.6px;color:#0b6cd4;letter-spacing:-0.298px;">E-Fatura</span>
<span id="t11" class="t" style="left:11.9px;top:147.6px;color:#6b6b6b;letter-spacing:-0.013px;">Aranacak metin</span>
<span id="t12" class="t" style="left:43.9px;top:171.6px;letter-spacing:-0.209px;">E-Arşiv Faturaları</span>
<span id="t13" class="t" style="left:43.9px;top:189.6px;letter-spacing:-0.256px;">Bekleyen E-Faturalar</span>
<span id="t14" class="t" style="left:43.9px;top:207.6px;letter-spacing:-0.248px;">Bekleyen E-İrsaliyeler</span>
<span id="t15" class="t" style="left:43.9px;top:225.6px;letter-spacing:-0.052px;">Mühürlenecek Faturalar</span>
<span id="t16" class="t" style="left:43.9px;top:243.6px;letter-spacing:-0.095px;">Mühürlenecek E-İrsaliyeler</span>
<span id="t17" class="t" style="left:43.9px;top:261.6px;letter-spacing:-0.14px;">Zarflanacak Faturalar</span>
<span id="t18" class="t" style="left:43.9px;top:279.6px;letter-spacing:-0.164px;">Zarflanacak İrsaliyeler</span>
<span id="t19" class="t" style="left:43.9px;top:297.6px;letter-spacing:-0.123px;">Gönderilen Faturalar</span>
<span id="t20" class="t" style="left:43.9px;top:315.6px;letter-spacing:-0.252px;">Gelen Faturalar</span>
<span id="t21" class="t" style="left:43.9px;top:333.6px;letter-spacing:-0.13px;">Gönderilen Cevaplar</span>
<span id="t22" class="t" style="left:43.9px;top:351.6px;letter-spacing:-0.271px;">Gelen Cevaplar</span>
<span id="t23" class="t" style="left:43.9px;top:369.6px;letter-spacing:-0.15px;">Gönderilen İrsaliyeler</span>
<span id="t24" class="t" style="left:43.9px;top:387.6px;letter-spacing:-0.241px;">Gelen İrsaliyeler</span>
<span id="t25" class="t" style="left:364.5px;top:77.6px;letter-spacing:-0.339px;">E-Fatura Özet Ekranı</span>
<span id="t26" class="t" style="left:520.5px;top:77.6px;letter-spacing:-0.225px;">Gelen Faturalar</span>
<span id="t27" class="t dis" style="left:393.8px;top:112.6px;letter-spacing:0.027px;">Değiştir</span>
<span id="t28" class="t dis" style="left:481.2px;top:112.6px;letter-spacing:-0.239px;">İncele</span>
<span id="t29" class="t" style="left:558.8px;top:112.6px;letter-spacing:-0.215px;">Sil</span>
<span id="t30" class="t" style="left:622px;top:112.6px;letter-spacing:-0.299px;">Yazdır</span>
<span id="t31" class="t" style="left:721.1px;top:112.6px;letter-spacing:-0.077px;">Filtrele</span>
<span id="t32" class="t" style="left:832.3px;top:112.6px;letter-spacing:-0.272px;">GİB'den Sorgula</span>
<span id="t33" class="t" style="left:991.8px;top:112.6px;letter-spacing:-0.276px;">Fatura Bağlantısı</span>
<span id="t34" class="t b" style="left:386.3px;top:146.6px;letter-spacing:-0.45px;transform:scaleX(0.9199);">Ka<i>...</i></span>
<span id="t35" class="t b" style="left:431px;top:146.6px;letter-spacing:-0.177px;">Tanzim Zamanı</span>
<span id="t36" class="t b" style="left:549.8px;top:146.6px;letter-spacing:-0.292px;">Kayıt Zamanı</span>
<span id="t37" class="t b" style="left:633.7px;top:146.6px;letter-spacing:-0.027px;">Belge No</span>
<span id="t38" class="t b" style="left:804.9px;top:146.6px;letter-spacing:0.207px;">İçerik</span>
<span id="t39" class="t b" style="left:849px;top:146.6px;letter-spacing:-0.181px;">VKN/TC<i>...</i></span>
<span id="t40" class="t b" style="left:911.5px;top:146.6px;letter-spacing:-0.086px;">Durum <i>...</i></span>
<span id="t41" class="t b" style="left:971.1px;top:146.6px;letter-spacing:-0.24px;">İlgili Firma Adı</span>
<span id="t42" class="t b" style="left:1202.9px;top:146.6px;letter-spacing:-0.45px;transform:scaleX(0.9541);">Fatura<i>...</i></span>
<span id="t43" class="t b" style="left:1262.1px;top:146.6px;letter-spacing:-0.45px;transform:scaleX(0.9702);">İşlenme <i>...</i></span>
<span id="t44" class="t b" style="left:1576px;top:146.6px;letter-spacing:-0.45px;transform:scaleX(0.9675);">Para <i>...</i></span>
<span id="t45" class="t b" style="left:1620.3px;top:146.6px;letter-spacing:-0.168px;">İşlem Gr<i>...</i></span>
<span id="t46" class="t b" style="left:1685px;top:146.6px;letter-spacing:-0.047px;">Zarf<i>...</i></span>
<span id="t47" class="t b" style="left:1725px;top:146.6px;letter-spacing:-0.145px;">Hata Seviyesi</span>
<span id="t48" class="t" style="left:386.1px;top:191.6px;color:#fff;letter-spacing:-0.45px;transform:scaleX(0.9642);">209.962</span>
<span id="t49" class="t" style="left:430.3px;top:191.6px;color:#fff;letter-spacing:-0.45px;transform:scaleX(0.9881);">02.05.2025 07:37</span>
<span id="t50" class="t" style="left:549.7px;top:191.6px;color:#fff;letter-spacing:-0.45px;transform:scaleX(0.9794);">27.10.2025 10<i>...</i></span>
<span id="t51" class="t" style="left:634.5px;top:191.6px;color:#fff;letter-spacing:-0.45px;transform:scaleX(0.9424);">TTF2025000001498</span>
<span id="t52" class="t" style="left:805.4px;top:191.6px;color:#fff;letter-spacing:-0.165px;">Ticari</span>
<span id="t53" class="t" style="left:848.8px;top:191.6px;color:#fff;letter-spacing:-0.45px;transform:scaleX(0.9894);">85703070<i>...</i></span>
<span id="t54" class="t" style="left:971.1px;top:191.6px;color:#fff;letter-spacing:-0.45px;transform:scaleX(0.9256);">TOSAF TURKEY PLASTİK İÇ VE DIŞ TİCARE<i>...</i></span>
<span id="t55" class="t" style="left:1203px;top:191.6px;color:#fff;letter-spacing:-0.45px;transform:scaleX(0.9757);">Satış</span>
<span id="t56" class="t" style="left:1262.1px;top:191.6px;color:#fff;letter-spacing:-0.062px;">İşlenmedi</span>
<span id="t57" class="t" style="left:1371.9px;top:191.6px;color:#fff;">0</span>
<span id="t58" class="t" style="left:1385.1px;top:191.6px;color:#fff;letter-spacing:-0.45px;transform:scaleX(0.9858);">Evet</span>
<span id="t59" class="t" style="left:1429.3px;top:191.6px;color:#fff;letter-spacing:-0.172px;">Tamaml<i>...</i></span>
<span id="t60" class="t" style="left:1531.3px;top:191.6px;color:#fff;letter-spacing:-0.45px;transform:scaleX(0.9741);">1.250,<i>...</i></span>
<span id="t61" class="t" style="left:1576px;top:191.6px;color:#fff;letter-spacing:-0.45px;transform:scaleX(0.8961);">EUR</span>
<span id="t62" class="t" style="left:1725px;top:191.6px;color:#fff;letter-spacing:-0.423px;">Başarılı</span>
<span id="t63" class="t" style="left:386.1px;top:213.6px;color:#fff;letter-spacing:-0.45px;transform:scaleX(0.9642);">209.961</span>
<span id="t64" class="t" style="left:430.3px;top:213.6px;color:#fff;letter-spacing:-0.45px;transform:scaleX(0.9985);">24.10.2025 11:45</span>
<span id="t65" class="t" style="left:549.7px;top:213.6px;color:#fff;letter-spacing:-0.45px;transform:scaleX(0.9906);">24.10.2025 11<i>...</i></span>
<span id="t66" class="t" style="left:634.5px;top:213.6px;color:#fff;letter-spacing:-0.45px;transform:scaleX(0.9087);">EFT2025000000069</span>
<span id="t67" class="t" style="left:805.4px;top:213.6px;color:#fff;letter-spacing:-0.165px;">Ticari</span>
<span id="t68" class="t" style="left:848.8px;top:213.6px;color:#fff;letter-spacing:-0.45px;transform:scaleX(0.9894);">33333333<i>...</i></span>
<span id="t69" class="t" style="left:971.1px;top:213.6px;color:#fff;letter-spacing:-0.017px;">Samsun Anonim Şirketi</span>
<span id="t70" class="t" style="left:1203px;top:213.6px;color:#fff;letter-spacing:-0.45px;transform:scaleX(0.9757);">Satış</span>
<span id="t71" class="t" style="left:1262.1px;top:213.6px;color:#fff;letter-spacing:-0.062px;">İşlenmedi</span>
<span id="t72" class="t" style="left:1371.9px;top:213.6px;color:#fff;">0</span>
<span id="t73" class="t" style="left:1385.1px;top:213.6px;color:#fff;letter-spacing:-0.45px;transform:scaleX(0.9858);">Evet</span>
<span id="t74" class="t" style="left:1429.3px;top:213.6px;color:#fff;letter-spacing:-0.172px;">Tamaml<i>...</i></span>
<span id="t75" class="t" style="left:1531.3px;top:213.6px;color:#fff;letter-spacing:-0.45px;transform:scaleX(0.9741);">1.180,<i>...</i></span>
<span id="t76" class="t" style="left:1576px;top:213.6px;color:#fff;letter-spacing:-0.45px;transform:scaleX(0.9211);">USD</span>
<span id="t77" class="t" style="left:1725px;top:213.6px;color:#fff;letter-spacing:-0.423px;">Başarılı</span>
<span id="t78" class="t" style="left:386.1px;top:235.6px;color:#fff;letter-spacing:-0.45px;transform:scaleX(0.9642);">209.959</span>
<span id="t79" class="t" style="left:430.3px;top:235.6px;color:#fff;letter-spacing:-0.45px;transform:scaleX(0.9881);">13.10.2025 12:23</span>
<span id="t80" class="t" style="left:549.7px;top:235.6px;color:#fff;letter-spacing:-0.45px;transform:scaleX(0.9906);">24.10.2025 11<i>...</i></span>
<span id="t81" class="t" style="left:634.5px;top:235.6px;color:#fff;letter-spacing:-0.45px;transform:scaleX(0.9579);">DL02025000780471</span>
<span id="t82" class="t" style="left:805.4px;top:235.6px;color:#fff;letter-spacing:-0.043px;">Temel</span>
<span id="t83" class="t" style="left:848.8px;top:235.6px;color:#fff;letter-spacing:-0.45px;transform:scaleX(0.9894);">29500103<i>...</i></span>
<span id="t84" class="t" style="left:971.1px;top:235.6px;color:#fff;letter-spacing:-0.245px;">DHL Worldwide Express Taşımacılık ve Tic<i>...</i></span>
<span id="t85" class="t" style="left:1203px;top:235.6px;color:#fff;letter-spacing:-0.45px;transform:scaleX(0.9757);">Satış</span>
<span id="t86" class="t" style="left:1262.1px;top:235.6px;color:#fff;letter-spacing:-0.062px;">İşlenmedi</span>
<span id="t87" class="t" style="left:1371.9px;top:235.6px;color:#fff;">0</span>
<span id="t88" class="t" style="left:1385.1px;top:235.6px;color:#fff;letter-spacing:-0.45px;transform:scaleX(0.9858);">Evet</span>
<span id="t89" class="t" style="left:1429.3px;top:235.6px;color:#fff;letter-spacing:-0.172px;">Tamaml<i>...</i></span>
<span id="t90" class="t" style="left:1531.3px;top:235.6px;color:#fff;letter-spacing:-0.45px;transform:scaleX(0.9741);">2.340,<i>...</i></span>
<span id="t91" class="t" style="left:1576px;top:235.6px;color:#fff;letter-spacing:-0.45px;transform:scaleX(0.891);">TRY</span>
<span id="t92" class="t" style="left:1725px;top:235.6px;color:#fff;letter-spacing:-0.423px;">Başarılı</span>
<span id="t93" class="t" style="left:386.1px;top:257.6px;color:#fff;letter-spacing:-0.45px;transform:scaleX(0.9642);">209.958</span>
<span id="t94" class="t" style="left:430.3px;top:257.6px;color:#fff;letter-spacing:-0.45px;transform:scaleX(0.9881);">17.10.2025 17:22</span>
<span id="t95" class="t" style="left:549.7px;top:257.6px;color:#fff;letter-spacing:-0.45px;transform:scaleX(0.9906);">24.10.2025 11<i>...</i></span>
<span id="t96" class="t" style="left:634.5px;top:257.6px;color:#fff;letter-spacing:-0.45px;transform:scaleX(0.9717);">PN22025000002103</span>
<span id="t97" class="t" style="left:805.4px;top:257.6px;color:#fff;letter-spacing:-0.043px;">Temel</span>
<span id="t98" class="t" style="left:848.8px;top:257.6px;color:#fff;letter-spacing:-0.45px;transform:scaleX(0.9894);">73200520<i>...</i></span>
<span id="t99" class="t" style="left:971.1px;top:257.6px;color:#fff;letter-spacing:-0.45px;transform:scaleX(0.9697);">POLİNAS PLASTİK SANAYİ VE TİCARETİ A<i>...</i></span>
<span id="t100" class="t" style="left:1203px;top:257.6px;color:#fff;letter-spacing:-0.45px;transform:scaleX(0.9757);">Satış</span>
<span id="t101" class="t" style="left:1262.1px;top:257.6px;color:#fff;letter-spacing:-0.062px;">İşlenmedi</span>
<span id="t102" class="t" style="left:1371.9px;top:257.6px;color:#fff;">0</span>
<span id="t103" class="t" style="left:1385.1px;top:257.6px;color:#fff;letter-spacing:-0.45px;transform:scaleX(0.9858);">Evet</span>
<span id="t104" class="t" style="left:1429.3px;top:257.6px;color:#fff;letter-spacing:-0.172px;">Tamaml<i>...</i></span>
<span id="t105" class="t" style="left:1531.3px;top:257.6px;color:#fff;letter-spacing:-0.45px;transform:scaleX(0.9741);">5.120,<i>...</i></span>
<span id="t106" class="t" style="left:1576px;top:257.6px;color:#fff;letter-spacing:-0.45px;transform:scaleX(0.9211);">USD</span>
<span id="t107" class="t" style="left:1725px;top:257.6px;color:#fff;letter-spacing:-0.423px;">Başarılı</span>
<span id="t108" class="t" style="left:386.1px;top:279.6px;color:#fff;letter-spacing:-0.45px;transform:scaleX(0.9642);">209.957</span>
<span id="t109" class="t" style="left:430.3px;top:279.6px;color:#fff;letter-spacing:-0.45px;transform:scaleX(0.9881);">16.10.2025 12:00</span>
<span id="t110" class="t" style="left:549.7px;top:279.6px;color:#fff;letter-spacing:-0.45px;transform:scaleX(0.9906);">24.10.2025 11<i>...</i></span>
<span id="t111" class="t" style="left:634.5px;top:279.6px;color:#fff;letter-spacing:-0.45px;transform:scaleX(0.9623);">PB22025000003898</span>
<span id="t112" class="t" style="left:805.4px;top:279.6px;color:#fff;letter-spacing:-0.043px;">Temel</span>
<span id="t113" class="t" style="left:848.8px;top:279.6px;color:#fff;letter-spacing:-0.45px;transform:scaleX(0.9894);">73200502<i>...</i></span>
<span id="t114" class="t" style="left:971.1px;top:279.6px;color:#fff;letter-spacing:-0.26px;">Polibak Plastik Film San. ve Tic.A.Ş.</span>
<span id="t115" class="t" style="left:1203px;top:279.6px;color:#fff;letter-spacing:-0.45px;transform:scaleX(0.9757);">Satış</span>
<span id="t116" class="t" style="left:1262.1px;top:279.6px;color:#fff;letter-spacing:-0.062px;">İşlenmedi</span>
<span id="t117" class="t" style="left:1371.9px;top:279.6px;color:#fff;">0</span>
<span id="t118" class="t" style="left:1385.1px;top:279.6px;color:#fff;letter-spacing:-0.45px;transform:scaleX(0.9858);">Evet</span>
<span id="t119" class="t" style="left:1429.3px;top:279.6px;color:#fff;letter-spacing:-0.172px;">Tamaml<i>...</i></span>
<span id="t120" class="t" style="left:1532.5px;top:279.6px;color:#fff;letter-spacing:-0.45px;transform:scaleX(0.9426);">1.660,<i>...</i></span>
<span id="t121" class="t" style="left:1576px;top:279.6px;color:#fff;letter-spacing:-0.45px;transform:scaleX(0.8961);">EUR</span>
<span id="t122" class="t" style="left:1725px;top:279.6px;color:#fff;letter-spacing:-0.423px;">Başarılı</span>
<span id="t123" class="t" style="left:386.1px;top:301.6px;color:#fff;letter-spacing:-0.45px;transform:scaleX(0.9642);">209.956</span>
<span id="t124" class="t" style="left:430.3px;top:301.6px;color:#fff;letter-spacing:-0.45px;transform:scaleX(0.9881);">19.08.2025 12:05</span>
<span id="t125" class="t" style="left:549.7px;top:301.6px;color:#fff;letter-spacing:-0.45px;transform:scaleX(0.9906);">24.10.2025 11<i>...</i></span>
<span id="t126" class="t" style="left:634.5px;top:301.6px;color:#fff;letter-spacing:-0.45px;transform:scaleX(0.9625);">SFA2025000006093</span>
<span id="t127" class="t" style="left:805.4px;top:301.6px;color:#fff;letter-spacing:-0.043px;">Temel</span>
<span id="t128" class="t" style="left:848.8px;top:301.6px;color:#fff;letter-spacing:-0.45px;transform:scaleX(0.9894);">78701965<i>...</i></span>
<span id="t129" class="t" style="left:971.1px;top:301.6px;color:#fff;letter-spacing:-0.45px;transform:scaleX(0.9751);">SÜPERFİLM AMBALAJ SAN. VE TİC A.Ş.</span>
<span id="t130" class="t" style="left:1203px;top:301.6px;color:#fff;letter-spacing:-0.45px;transform:scaleX(0.9757);">Satış</span>
<span id="t131" class="t" style="left:1262.1px;top:301.6px;color:#fff;letter-spacing:-0.062px;">İşlenmedi</span>
<span id="t132" class="t" style="left:1371.9px;top:301.6px;color:#fff;">0</span>
<span id="t133" class="t" style="left:1385.1px;top:301.6px;color:#fff;letter-spacing:-0.45px;transform:scaleX(0.9858);">Evet</span>
<span id="t134" class="t" style="left:1429.3px;top:301.6px;color:#fff;letter-spacing:-0.172px;">Tamaml<i>...</i></span>
<span id="t135" class="t" style="left:1535.2px;top:301.6px;color:#fff;letter-spacing:-0.45px;transform:scaleX(0.9434);">29.99<i>...</i></span>
<span id="t136" class="t" style="left:1576px;top:301.6px;color:#fff;letter-spacing:-0.45px;transform:scaleX(0.8961);">EUR</span>
<span id="t137" class="t" style="left:1725px;top:301.6px;color:#fff;letter-spacing:-0.423px;">Başarılı</span>
<span id="t138" class="t" style="left:386.1px;top:323.6px;color:#000;letter-spacing:-0.45px;transform:scaleX(0.9642);">209.955</span>
<span id="t139" class="t" style="left:430.3px;top:323.6px;color:#000;letter-spacing:-0.45px;transform:scaleX(0.9881);">14.10.2025 13:06</span>
<span id="t140" class="t" style="left:549.7px;top:323.6px;color:#000;letter-spacing:-0.45px;transform:scaleX(0.9906);">24.10.2025 11<i>...</i></span>
<span id="t141" class="t" style="left:634.5px;top:323.6px;color:#000;letter-spacing:-0.45px;transform:scaleX(0.9841);">RPA2025000063455</span>
<span id="t142" class="t" style="left:805.4px;top:323.6px;color:#000;letter-spacing:-0.165px;">Ticari</span>
<span id="t143" class="t" style="left:848.8px;top:323.6px;color:#000;letter-spacing:-0.45px;transform:scaleX(0.9894);">61803870<i>...</i></span>
<span id="t144" class="t" style="left:971.1px;top:323.6px;color:#000;letter-spacing:-0.143px;">Mersin Uluslararası Liman İşletmeciliği A.Ş.</span>
<span id="t145" class="t" style="left:1203px;top:323.6px;color:#000;letter-spacing:-0.45px;transform:scaleX(0.9757);">Satış</span>
<span id="t146" class="t" style="left:1262.1px;top:323.6px;color:#000;letter-spacing:-0.062px;">İşlenmedi</span>
<span id="t147" class="t" style="left:1371.9px;top:323.6px;color:#000;">0</span>
<span id="t148" class="t" style="left:1385.1px;top:323.6px;color:#000;letter-spacing:-0.45px;transform:scaleX(0.9858);">Evet</span>
<span id="t149" class="t" style="left:1429.3px;top:323.6px;color:#000;letter-spacing:-0.45px;transform:scaleX(0.9763);">Cevap B<i>...</i></span>
<span id="t150" class="t" style="left:1531.3px;top:323.6px;color:#000;letter-spacing:-0.45px;transform:scaleX(0.9741);">6.213,<i>...</i></span>
<span id="t151" class="t" style="left:1576px;top:323.6px;color:#000;letter-spacing:-0.45px;transform:scaleX(0.891);">TRY</span>
<span id="t152" class="t" style="left:1725px;top:323.6px;color:#000;letter-spacing:-0.423px;">Başarılı</span>
<span id="t153" class="t" style="left:386.1px;top:345.6px;color:#000;letter-spacing:-0.45px;transform:scaleX(0.9642);">209.954</span>
<span id="t154" class="t" style="left:430.3px;top:345.6px;color:#000;letter-spacing:-0.45px;transform:scaleX(0.9881);">22.09.2025 00:00</span>
<span id="t155" class="t" style="left:549.7px;top:345.6px;color:#000;letter-spacing:-0.45px;transform:scaleX(0.9906);">24.10.2025 11<i>...</i></span>
<span id="t156" class="t" style="left:634.5px;top:345.6px;color:#000;letter-spacing:-0.45px;transform:scaleX(0.9415);">RTE2025000000706</span>
<span id="t157" class="t" style="left:805.4px;top:345.6px;color:#000;letter-spacing:-0.165px;">Ticari</span>
<span id="t158" class="t" style="left:848.8px;top:345.6px;color:#000;letter-spacing:-0.45px;transform:scaleX(0.9894);">36100366<i>...</i></span>
<span id="t159" class="t" style="left:971.1px;top:345.6px;color:#000;letter-spacing:-0.45px;transform:scaleX(0.9692);">ERKAN TEKSTİL SANAYİ ANONİM ŞİRKETİ</span>
<span id="t160" class="t" style="left:1203px;top:345.6px;color:#000;letter-spacing:-0.277px;">İhraç Ka<i>...</i></span>
<span id="t161" class="t" style="left:1262.1px;top:345.6px;color:#000;letter-spacing:-0.062px;">İşlenmedi</span>
<span id="t162" class="t" style="left:1371.9px;top:345.6px;color:#000;">0</span>
<span id="t163" class="t" style="left:1385.1px;top:345.6px;color:#000;letter-spacing:-0.45px;transform:scaleX(0.9858);">Evet</span>
<span id="t164" class="t" style="left:1429.3px;top:345.6px;color:#000;letter-spacing:-0.45px;transform:scaleX(0.9763);">Cevap B<i>...</i></span>
<span id="t165" class="t" style="left:1531.3px;top:345.6px;color:#000;letter-spacing:-0.45px;transform:scaleX(0.9741);">3.679,<i>...</i></span>
<span id="t166" class="t" style="left:1576px;top:345.6px;color:#000;letter-spacing:-0.45px;transform:scaleX(0.9211);">USD</span>
<span id="t167" class="t" style="left:1725px;top:345.6px;color:#000;letter-spacing:-0.423px;">Başarılı</span>
<span id="t168" class="t" style="left:386.1px;top:367.6px;color:#000;letter-spacing:-0.45px;transform:scaleX(0.9642);">209.953</span>
<span id="t169" class="t" style="left:430.3px;top:367.6px;color:#000;letter-spacing:-0.45px;transform:scaleX(0.9881);">22.10.2025 10:21</span>
<span id="t170" class="t" style="left:549.7px;top:367.6px;color:#000;letter-spacing:-0.45px;transform:scaleX(0.9794);">24.10.2025 10<i>...</i></span>
<span id="t171" class="t" style="left:634.5px;top:367.6px;color:#000;letter-spacing:-0.45px;transform:scaleX(0.9455);">TEK2025000002255</span>
<span id="t172" class="t" style="left:805.4px;top:367.6px;color:#000;letter-spacing:-0.165px;">Ticari</span>
<span id="t173" class="t" style="left:848.8px;top:367.6px;color:#000;letter-spacing:-0.45px;transform:scaleX(0.9894);">83604596<i>...</i></span>
<span id="t174" class="t" style="left:971.1px;top:367.6px;color:#000;letter-spacing:-0.45px;transform:scaleX(0.9712);">TEKNOPACK PLASTİK AMBALAJ SAN.VE <i>...</i></span>
<span id="t175" class="t" style="left:1203px;top:367.6px;color:#000;letter-spacing:-0.45px;transform:scaleX(0.9757);">Satış</span>
<span id="t176" class="t" style="left:1262.1px;top:367.6px;color:#000;letter-spacing:-0.062px;">İşlenmedi</span>
<span id="t177" class="t" style="left:1371.9px;top:367.6px;color:#000;">0</span>
<span id="t178" class="t" style="left:1385.1px;top:367.6px;color:#000;letter-spacing:-0.45px;transform:scaleX(0.9858);">Evet</span>
<span id="t179" class="t" style="left:1429.3px;top:367.6px;color:#000;letter-spacing:-0.45px;transform:scaleX(0.9763);">Cevap B<i>...</i></span>
<span id="t180" class="t" style="left:1531.3px;top:367.6px;color:#000;letter-spacing:-0.45px;transform:scaleX(0.9741);">3.375,<i>...</i></span>
<span id="t181" class="t" style="left:1576px;top:367.6px;color:#000;letter-spacing:-0.45px;transform:scaleX(0.8961);">EUR</span>
<span id="t182" class="t" style="left:1725px;top:367.6px;color:#000;letter-spacing:-0.423px;">Başarılı</span>
<span id="t183" class="t" style="left:386.1px;top:389.6px;color:#000;letter-spacing:-0.45px;transform:scaleX(0.9642);">209.952</span>
<span id="t184" class="t" style="left:430.3px;top:389.6px;color:#000;letter-spacing:-0.45px;transform:scaleX(0.9881);">20.10.2025 00:00</span>
<span id="t185" class="t" style="left:549.7px;top:389.6px;color:#000;letter-spacing:-0.45px;transform:scaleX(0.9794);">24.10.2025 10<i>...</i></span>
<span id="t186" class="t" style="left:634.5px;top:389.6px;color:#000;letter-spacing:-0.45px;transform:scaleX(0.9555);">RTK2025000004311</span>
<span id="t187" class="t" style="left:805.4px;top:389.6px;color:#000;letter-spacing:-0.165px;">Ticari</span>
<span id="t188" class="t" style="left:848.8px;top:389.6px;color:#000;letter-spacing:-0.45px;transform:scaleX(0.9894);">73506677<i>...</i></span>
<span id="t189" class="t" style="left:971.1px;top:389.6px;color:#000;letter-spacing:-0.45px;transform:scaleX(0.946);">RİTAŞ KİMYA VE TEKSTİL SANAYİ TİCARET<i>...</i></span>
<span id="t190" class="t" style="left:1203px;top:389.6px;color:#000;letter-spacing:-0.45px;transform:scaleX(0.9757);">Satış</span>
<span id="t191" class="t" style="left:1262.1px;top:389.6px;color:#000;letter-spacing:-0.062px;">İşlenmedi</span>
<span id="t192" class="t" style="left:1371.9px;top:389.6px;color:#000;">0</span>
<span id="t193" class="t" style="left:1385.1px;top:389.6px;color:#000;letter-spacing:-0.45px;transform:scaleX(0.9858);">Evet</span>
<span id="t194" class="t" style="left:1429.3px;top:389.6px;color:#000;letter-spacing:-0.45px;transform:scaleX(0.9763);">Cevap B<i>...</i></span>
<span id="t195" class="t" style="left:1534.8px;top:389.6px;color:#000;letter-spacing:-0.45px;transform:scaleX(0.9548);">33.13<i>...</i></span>
<span id="t196" class="t" style="left:1576px;top:389.6px;color:#000;letter-spacing:-0.45px;transform:scaleX(0.9211);">USD</span>
<span id="t197" class="t" style="left:1725px;top:389.6px;color:#000;letter-spacing:-0.423px;">Başarılı</span>
<div style="left:1230px;top:95px;width:64px;height:41px;border:3px solid #f00;border-radius:2px"></div>
<div style="left:1234px;top:144px;width:337px;height:135px;border:1px solid #c6c6c6;background:#f2f2f2;box-shadow:2px 2px 3px rgba(0,0,0,.45)"></div>
<div style="left:1265px;top:172px;width:305px;height:1px;background:#d4d4d4;"></div>
<div style="left:1265px;top:201px;width:305px;height:1px;background:#d4d4d4;"></div>
<div style="left:1265px;top:230px;width:305px;height:1px;background:#d4d4d4;"></div>
<div style="left:1237px;top:234px;width:332px;height:21px;background:#91c9f7;"></div>
<svg style="left:1556px;top:211px" width="7" height="10" viewBox="0 0 7 10"><path d="M1 1L5 5L1 9" stroke="#222" stroke-width="1.2" fill="none"/></svg>
<div style="left:1231px;top:225px;width:335px;height:27px;border:3px solid #f00;border-radius:2px"></div>
<span id="t198" class="t" style="left:1268.7px;top:149.6px;letter-spacing:-0.195px;">Seçili Faturaları Güncelle</span>
<span id="t199" class="t" style="left:1268.7px;top:178.6px;letter-spacing:-0.151px;">Tarih Filtresiyle Güncelle</span>
<span id="t200" class="t" style="left:1268.7px;top:208.1px;letter-spacing:0.048px;">İşlenme Durumu</span>
<span id="t201" class="t" style="left:1268.7px;top:236.6px;letter-spacing:-0.103px;">Seçili Faturaların Aktarımını Kontrol Et</span>
<span id="t202" class="t" style="left:1268.7px;top:258.6px;letter-spacing:-0.099px;">Tarih Filtresiyle Faturaların Aktarımını Kontrol Et</span>
</body></html>
